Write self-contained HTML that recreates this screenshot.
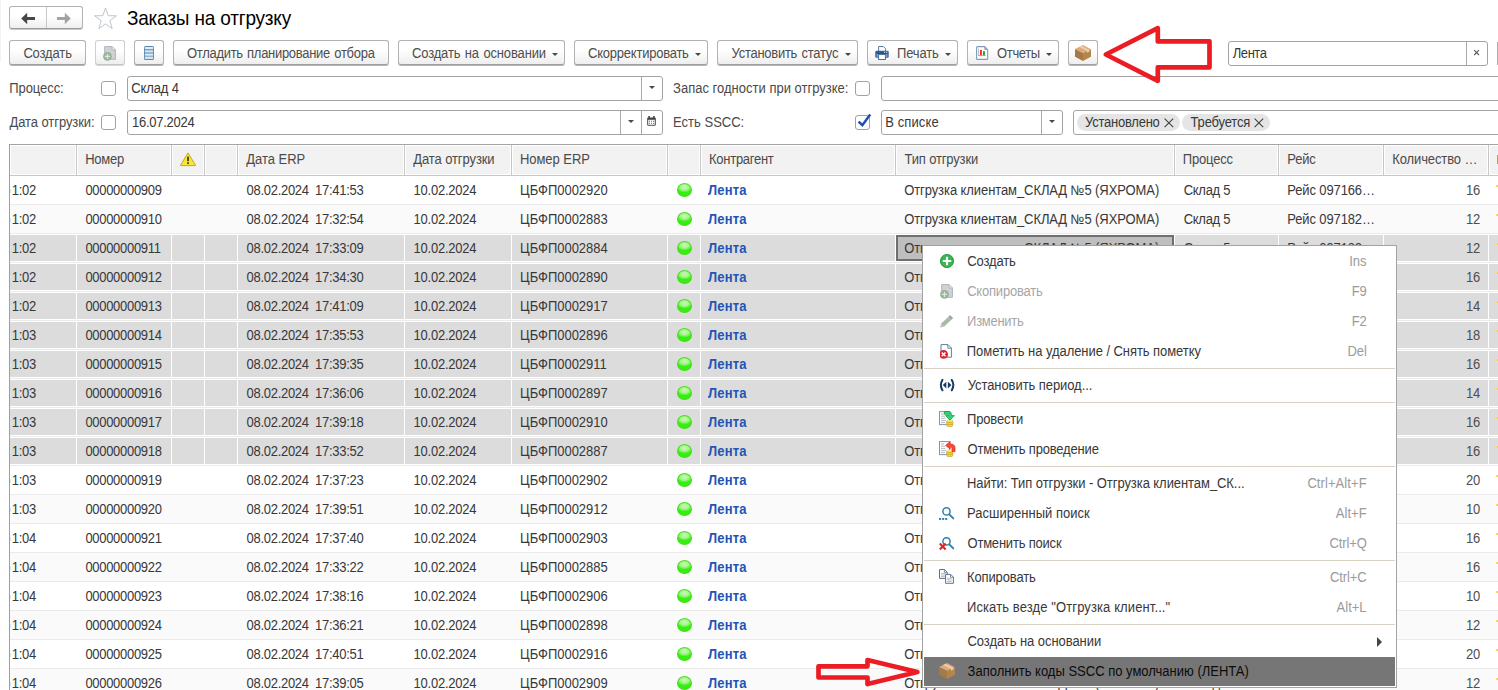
<!DOCTYPE html>
<html lang="ru"><head><meta charset="utf-8"><title>Заказы на отгрузку</title>
<style>
html,body{margin:0;padding:0;background:#fff;}
body{width:1498px;height:690px;overflow:hidden;position:relative;font-family:"Liberation Sans",sans-serif;font-size:13px;color:#383838;}
*{box-sizing:border-box;}
.a{position:absolute;}
.t{position:absolute;height:20px;line-height:20px;white-space:nowrap;transform:scaleY(1.075);transform-origin:0 15px;}
.g{color:#4e4e4e;}
.btn{position:absolute;top:40px;height:25px;border:1px solid #b2b2b2;border-bottom-color:#a0a0a0;border-radius:3px;background:linear-gradient(#fff 0%,#fff 40%,#eee 100%);box-shadow:0 1px 0 #b4b4b4;}
.btn.d{border-color:#cfcfcf;border-bottom-color:#c6c6c6;box-shadow:0 1px 0 #d6d6d6;}
.inp{position:absolute;height:25px;border:1px solid #a3a3a3;border-radius:3px;background:#fff;}
.dv{position:absolute;top:0;width:1px;height:23px;background:#a9a9a9;}
.cb{position:absolute;width:15px;height:15px;border:1px solid #a2a2a2;border-radius:3px;background:#fff;}
.lbl{color:#4a4a4a;}
.hc{position:absolute;top:146px;height:28px;background:#f2f2f2;}
.hl{position:absolute;top:145px;height:30px;width:1px;background:#c8c8c8;}
.rw{position:absolute;left:10px;width:1488px;height:28px;}
.rl{position:absolute;left:10px;width:1488px;height:1px;background:#ebebeb;}
.sc{position:absolute;height:26px;background:#dcdcdc;}
.blue{color:#2354b5;font-weight:bold;}
.dot{position:absolute;width:15px;height:14px;border-radius:50%;background:radial-gradient(ellipse 52% 38% at 50% 30%,#c9f7ba 0%,#a6f58c 55%,rgba(120,240,80,0) 100%),#36ee12;box-shadow:inset 0 0 0 1px #45de1a;}
.menu{position:absolute;left:922px;top:245px;width:475px;height:443px;background:#fff;border:1px solid #a3a3a3;}
.ms{position:absolute;left:1px;right:1px;height:1px;background:#d7d2c1;}
.k{color:#9b9b9b;}
.dis{color:#a6a6a6;}
.caret{position:absolute;width:0;height:0;border-left:3px solid transparent;border-right:3px solid transparent;border-top:3px solid #484848;}
</style></head><body>

<div class="a" style="left:0;top:0;width:1px;height:62px;background:#f3f3f3"></div>
<div class="a" style="left:9px;top:6px;width:74px;height:23px;border:1px solid #b2b2b2;border-bottom-color:#9c9c9c;border-radius:3px;background:linear-gradient(#fff 0%,#fff 45%,#eee 100%);box-shadow:0 1px 0 rgba(0,0,0,.22);"></div>
<div class="a" style="left:46px;top:7px;width:1px;height:21px;background:#c9c9c9;"></div>
<svg class="a" style="left:0;top:0" width="130" height="36" viewBox="0 0 130 36"><path d="M21.2 18.5 L27.2 12.8 L27.2 17 L35 17 L35 20 L27.2 20 L27.2 24.2 Z" fill="#474747"/><path d="M70.8 18.5 L64.8 12.8 L64.8 17 L57 17 L57 20 L64.8 20 L64.8 24.2 Z" fill="#a3a3a3"/><path d="M105.5 7.9 L108.2 15.7 L116.4 15.8 L109.8 20.7 L112.2 28.6 L105.5 23.9 L98.8 28.6 L101.2 20.7 L94.6 15.8 L102.8 15.7 Z" fill="#fff" stroke="#b5bec8" stroke-width="0.9"/></svg>
<div class="a" style="left:127px;top:6px;height:26px;line-height:26px;font-size:19px;color:#000;white-space:nowrap;letter-spacing:-0.22px;word-spacing:0.2px;transform:scaleY(1.04);transform-origin:0 19px;">Заказы на отгрузку</div>
<div class="btn" style="left:9px;width:77px;"></div><div class="t g" style="left:23.38px;top:44px;letter-spacing:-0.142px;">Создать</div>
<div class="btn d" style="left:95px;width:30px;"></div><svg class="a" style="left:103px;top:46px;" width="14" height="16" viewBox="0 0 14 16"><path d="M1.7 0.6 H9.2 L12.4 3.8 V13.3 H1.7 Z" fill="#d2d2d2" stroke="#a9b4c3" stroke-width="1"/><path d="M9 0.8 V4 H12.2" fill="#ececec" stroke="#a9b4c3" stroke-width="0.8"/><circle cx="4.5" cy="10.4" r="4.4" fill="#96b498"/><path d="M4.5 7.7 V13.1 M1.8 10.4 H7.2" stroke="#dbe6dc" stroke-width="1.3" fill="none"/></svg>
<div class="btn" style="left:134px;width:30px;"></div><svg class="a" style="left:144px;top:46px;" width="10" height="14" viewBox="0 0 10 14"><rect x="0" y="0" width="10" height="14" rx="1.6" fill="#5c86aa"/><rect x="0.8" y="1" width="8.4" height="2.3" rx="0.6" fill="#d9eaf8"/><rect x="0.8" y="4.2" width="8.4" height="2.3" rx="0.6" fill="#d2e6f6"/><rect x="0.8" y="7.4" width="8.4" height="2.3" rx="0.6" fill="#d9eaf8"/><rect x="0.8" y="10.6" width="8.4" height="2.3" rx="0.6" fill="#d2e6f6"/></svg>
<div class="btn" style="left:173px;width:216px;"></div><div class="t g" style="left:186.97px;top:44px;letter-spacing:-0.294px;word-spacing:1.0px;">Отладить планирование отбора</div>
<div class="btn" style="left:398px;width:167px;"></div><div class="t g" style="left:411.98px;top:44px;letter-spacing:-0.146px;word-spacing:1.0px;">Создать на основании</div><span class="caret" style="left:552px;top:53px"></span>
<div class="btn" style="left:574px;width:134px;"></div><div class="t g" style="left:588.08px;top:44px;letter-spacing:-0.234px;">Скорректировать</div><span class="caret" style="left:695px;top:53px"></span>
<div class="btn" style="left:717px;width:141px;"></div><div class="t g" style="left:731.53px;top:44px;letter-spacing:-0.261px;word-spacing:1.0px;">Установить статус</div><span class="caret" style="left:845px;top:53px"></span>
<div class="btn" style="left:867px;width:91px;"></div><div class="t g" style="left:897.0px;top:44px;letter-spacing:-0.14px;">Печать</div><span class="caret" style="left:945px;top:53px"></span><svg class="a" style="left:875px;top:46px;" width="14" height="14" viewBox="0 0 14 14"><path d="M3.6 5 V0.5 H8.4 L10.4 2.5 V5" fill="#fff" stroke="#5d7d9c" stroke-width="1"/><rect x="0.3" y="4.8" width="13.4" height="7" rx="1.4" fill="#2d5f92"/><rect x="1.6" y="7.6" width="10.8" height="3.4" fill="#7fa3c8"/><rect x="2" y="6.9" width="10" height="1" fill="#27486b"/><rect x="9" y="5.7" width="1.2" height="1" fill="#e8f0f8"/><rect x="11" y="5.7" width="1.2" height="1" fill="#e8f0f8"/><rect x="3.6" y="8.4" width="6.8" height="5.1" fill="#fff" stroke="#486f96" stroke-width="1"/></svg>
<div class="btn" style="left:967px;width:92px;"></div><div class="t g" style="left:997.08px;top:44px;letter-spacing:-0.375px;">Отчеты</div><span class="caret" style="left:1046px;top:53px"></span><svg class="a" style="left:976px;top:46px;" width="13" height="14" viewBox="0 0 13 14"><path d="M0.6 1.6 Q0.6 0.6 1.6 0.6 H8.6 L11.7 3.7 V12.4 Q11.7 13.4 10.7 13.4 H1.6 Q0.6 13.4 0.6 12.4 Z" fill="#fff" stroke="#7f9bb6" stroke-width="1.1"/><path d="M8.4 0.8 L11.5 3.9 H8.4 Z" fill="#8aa3bb"/><rect x="2.2" y="2.6" width="0.8" height="7" fill="#aab3bd"/><rect x="2.2" y="9.2" width="7.6" height="0.8" fill="#c98fa0"/><rect x="4" y="4" width="1.9" height="5.2" fill="#ff2a1c"/><rect x="7" y="5.2" width="1.9" height="4" fill="#19a22c"/></svg>
<div class="btn" style="left:1068px;width:30px;"></div><svg class="a" style="left:1075px;top:45px;" width="16" height="16" viewBox="0 0 16 16"><path d="M8 0 L16 4.2 L8 8.1 L0 4.1 Z" fill="#dcaa7b"/><path d="M0 4.1 L8 8.1 L8 15.9 L0 11.8 Z" fill="#a57a47"/><path d="M16 4.2 L8 8.1 L8 15.9 L16 11.8 Z" fill="#b5854f"/><path d="M4.2 1.9 L6.6 0.7 L14.4 4.9 L14.4 6.6 L12.1 7.7 L12.1 6.1 Z" fill="#f1cdac"/></svg>
<div class="inp" style="left:1228px;top:41px;width:260px;height:25px;"><div class="dv" style="left:237px"></div></div>
<div class="t " style="left:1232.77px;top:44px;letter-spacing:-0.444px;">Лента</div>
<svg class="a" style="left:1473px;top:49px" width="8" height="8" viewBox="0 0 8 8"><path d="M1.2 1.2 L6 6 M6 1.2 L1.2 6" stroke="#5a5a5a" stroke-width="1.1" fill="none"/></svg>
<div class="a" style="left:1497px;top:42px;width:1px;height:23px;background:#adadad"></div>
<div class="t lbl" style="left:9.2px;top:79px;letter-spacing:-0.064px;">Процесс:</div>
<div class="cb" style="left:101px;top:81px"></div>
<div class="inp" style="left:127px;top:76px;width:536px;"><div class="dv" style="left:513px"></div><span class="caret" style="left:521px;top:9px"></span></div>
<div class="t " style="left:131.18px;top:79px;letter-spacing:-0.117px;">Склад 4</div>
<div class="t lbl" style="left:673.1px;top:79px;letter-spacing:0.007px;">Запас годности при отгрузке:</div>
<div class="cb" style="left:855px;top:81px"></div>
<div class="inp" style="left:881px;top:76px;width:640px;"></div>
<div class="t lbl" style="left:9.47px;top:113px;letter-spacing:-0.075px;">Дата отгрузки:</div>
<div class="cb" style="left:101px;top:115px"></div>
<div class="inp" style="left:127px;top:110px;width:536px;"><div class="dv" style="left:492px"></div><span class="caret" style="left:500px;top:9px"></span><div class="dv" style="left:513px"></div></div>
<svg class="a" style="left:647px;top:116px;" width="9" height="10" viewBox="0 0 9 10"><rect x="0.2" y="1.4" width="8.6" height="8.4" rx="1.2" fill="#454545"/><rect x="1.3" y="0" width="1.6" height="2.4" fill="#454545"/><rect x="6.1" y="0" width="1.6" height="2.4" fill="#454545"/><rect x="1.2" y="3.8" width="6.6" height="5" fill="#fff"/><rect x="2" y="4.7" width="1" height="1" fill="#666"/><rect x="4" y="4.7" width="1" height="1" fill="#666"/><rect x="6" y="4.7" width="1" height="1" fill="#666"/><rect x="2" y="6.8" width="1" height="1" fill="#666"/><rect x="4" y="6.8" width="1" height="1" fill="#666"/><rect x="6" y="6.8" width="1" height="1" fill="#666"/></svg>
<div class="t " style="left:132.0px;top:113px;letter-spacing:-0.272px;">16.07.2024</div>
<div class="t lbl" style="left:673.08px;top:113px;letter-spacing:0.006px;">Есть SSCC:</div>
<div class="cb" style="left:855px;top:115px"></div>
<svg class="a" style="left:857px;top:113px;" width="16" height="15" viewBox="0 0 16 15"><path d="M1.6 8.6 L5.4 12.2 L13.2 1.6" fill="none" stroke="#1f4fb0" stroke-width="2.5" stroke-linecap="butt" stroke-linejoin="miter"/></svg>
<div class="inp" style="left:881px;top:110px;width:182px;"><div class="dv" style="left:159px"></div><span class="caret" style="left:167px;top:9px"></span></div>
<div class="t " style="left:885.17px;top:113px;letter-spacing:0.118px;">В списке</div>
<div class="inp" style="left:1073px;top:110px;width:440px;"></div>
<div class="a" style="left:1077px;top:114px;width:103px;height:17px;border-radius:9px;background:#e5e5e5;"></div>
<div class="t " style="left:1085.12px;top:113px;letter-spacing:-0.245px;">Установлено</div>
<div class="a" style="left:1182px;top:114px;width:88px;height:17px;border-radius:9px;background:#e5e5e5;"></div>
<div class="t " style="left:1190.55px;top:113px;letter-spacing:-0.175px;">Требуется</div>
<svg class="a" style="left:1164px;top:118px" width="10" height="10" viewBox="0 0 10 10"><path d="M0.6 0.6 L9.2 9.2 M9.2 0.6 L0.6 9.2" stroke="#404040" stroke-width="1.1" fill="none"/></svg>
<svg class="a" style="left:1254px;top:118px" width="10" height="10" viewBox="0 0 10 10"><path d="M0.6 0.6 L9.2 9.2 M9.2 0.6 L0.6 9.2" stroke="#404040" stroke-width="1.1" fill="none"/></svg>
<div class="a" style="left:9px;top:144px;width:1489px;height:1px;background:#a4a4a4"></div>
<div class="a" style="left:9px;top:144px;width:1px;height:546px;background:#9f9f9f"></div>
<div class="a" style="left:10px;top:175px;width:1488px;height:1px;background:#c6c6c6"></div>
<div class="hc" style="left:11px;width:64px;"></div>
<div class="hl" style="left:76px"></div>
<div class="hc" style="left:78px;width:92px;"></div>
<div class="hl" style="left:171px"></div>
<div class="t lbl" style="left:85.17px;top:150px;letter-spacing:-0.219px;">Номер</div>
<div class="hc" style="left:173px;width:30px;"></div>
<div class="hl" style="left:204px"></div>
<svg class="a" style="left:180px;top:152px;" width="16" height="15" viewBox="0 0 16 15"><path d="M8 0.9 L15.4 13 Q15.6 13.6 15 13.6 H1 Q0.4 13.6 0.6 13 Z" fill="#fbe535" stroke="#b3a11c" stroke-width="0.9" stroke-linejoin="round"/><rect x="7.2" y="4.6" width="1.7" height="4.6" fill="#3d3600"/><rect x="7.2" y="10.3" width="1.7" height="1.7" fill="#3d3600"/></svg>
<div class="hc" style="left:206px;width:30px;"></div>
<div class="hl" style="left:237px"></div>
<div class="hc" style="left:239px;width:164px;"></div>
<div class="hl" style="left:404px"></div>
<div class="t lbl" style="left:246.17px;top:150px;letter-spacing:-0.011px;">Дата ERP</div>
<div class="hc" style="left:406px;width:104px;"></div>
<div class="hl" style="left:511px"></div>
<div class="t lbl" style="left:413.27px;top:150px;letter-spacing:-0.1px;">Дата отгрузки</div>
<div class="hc" style="left:513px;width:153px;"></div>
<div class="hl" style="left:667px"></div>
<div class="t lbl" style="left:519.98px;top:150px;letter-spacing:-0.05px;">Номер ERP</div>
<div class="hc" style="left:669px;width:30px;"></div>
<div class="hl" style="left:700px"></div>
<div class="hc" style="left:702px;width:192px;"></div>
<div class="hl" style="left:895px"></div>
<div class="t lbl" style="left:709.07px;top:150px;letter-spacing:-0.275px;">Контрагент</div>
<div class="hc" style="left:897px;width:276px;"></div>
<div class="hl" style="left:1174px"></div>
<div class="t lbl" style="left:904.55px;top:150px;letter-spacing:-0.159px;">Тип отгрузки</div>
<div class="hc" style="left:1176px;width:101px;"></div>
<div class="hl" style="left:1278px"></div>
<div class="t lbl" style="left:1182.7px;top:150px;letter-spacing:-0.15px;">Процесс</div>
<div class="hc" style="left:1280px;width:102px;"></div>
<div class="hl" style="left:1383px"></div>
<div class="t lbl" style="left:1287.28px;top:150px;letter-spacing:-0.175px;">Рейс</div>
<div class="hc" style="left:1385px;width:102px;"></div>
<div class="hl" style="left:1488px"></div>
<div class="t lbl" style="left:1392.28px;top:150px;letter-spacing:-0.118px;">Количество …</div>
<div class="hc" style="left:1490px;width:19px;"></div>
<div class="a" style="left:1497px;top:155px;width:1px;height:9px;background:#b7996b"></div>
<div class="rl" style="top:204px"></div>
<div class="a" style="left:10px;top:189px;width:1px;height:4px;background:#d3e8f6"></div>
<div class="t " style="left:11.8px;top:181px;letter-spacing:-0.275px;">1:02</div>
<div class="t " style="left:85.4px;top:181px;letter-spacing:-0.297px;">00000000909</div>
<div class="t " style="left:246.5px;top:181px;letter-spacing:-0.281px;word-spacing:3.0px;">08.02.2024 17:41:53</div>
<div class="t " style="left:413.6px;top:181px;letter-spacing:-0.25px;">10.02.2024</div>
<div class="t " style="left:520.08px;top:181px;letter-spacing:-0.023px;">ЦБФП0002920</div>
<div class="dot" style="left:677px;top:183px"></div>
<div class="t blue" style="left:708.1px;top:181px;letter-spacing:0.156px;">Лента</div>
<div class="t " style="left:904.17px;top:181px;letter-spacing:-0.085px;">Отгрузка клиентам_СКЛАД №5 (ЯХРОМА)</div>
<div class="t " style="left:1183.67px;top:181px;letter-spacing:-0.275px;">Склад 5</div>
<div class="t " style="left:1287.17px;top:181px;letter-spacing:-0.114px;">Рейс 097166…</div>
<div class="t g" style="left:1466.0px;top:181px;letter-spacing:-0.275px;">16</div>
<div class="a" style="left:1496px;top:185px;width:2px;height:2px;background:linear-gradient(90deg,#fbe9a8,#f3c31b)"></div>
<div class="rw" style="top:205px;background:#fafafa"></div>
<div class="rl" style="top:233px"></div>
<div class="a" style="left:10px;top:218px;width:1px;height:4px;background:#d3e8f6"></div>
<div class="t " style="left:11.8px;top:210px;letter-spacing:-0.275px;">1:02</div>
<div class="t " style="left:85.4px;top:210px;letter-spacing:-0.297px;">00000000910</div>
<div class="t " style="left:246.5px;top:210px;letter-spacing:-0.281px;word-spacing:3.0px;">08.02.2024 17:32:54</div>
<div class="t " style="left:413.6px;top:210px;letter-spacing:-0.25px;">10.02.2024</div>
<div class="t " style="left:520.08px;top:210px;letter-spacing:-0.023px;">ЦБФП0002883</div>
<div class="dot" style="left:677px;top:212px"></div>
<div class="t blue" style="left:708.1px;top:210px;letter-spacing:0.156px;">Лента</div>
<div class="t " style="left:904.17px;top:210px;letter-spacing:-0.085px;">Отгрузка клиентам_СКЛАД №5 (ЯХРОМА)</div>
<div class="t " style="left:1183.67px;top:210px;letter-spacing:-0.275px;">Склад 5</div>
<div class="t " style="left:1287.17px;top:210px;letter-spacing:-0.114px;">Рейс 097182…</div>
<div class="t g" style="left:1466.0px;top:210px;letter-spacing:-0.275px;">12</div>
<div class="a" style="left:1496px;top:214px;width:2px;height:2px;background:linear-gradient(90deg,#fbe9a8,#f3c31b)"></div>
<div class="sc" style="left:10px;top:235px;width:66px;"></div>
<div class="sc" style="left:77px;top:235px;width:94px;"></div>
<div class="sc" style="left:172px;top:235px;width:32px;"></div>
<div class="sc" style="left:205px;top:235px;width:32px;"></div>
<div class="sc" style="left:238px;top:235px;width:166px;"></div>
<div class="sc" style="left:405px;top:235px;width:106px;"></div>
<div class="sc" style="left:512px;top:235px;width:155px;"></div>
<div class="sc" style="left:668px;top:235px;width:32px;"></div>
<div class="sc" style="left:701px;top:235px;width:194px;"></div>
<div class="sc" style="left:896px;top:235px;width:278px;"></div>
<div class="sc" style="left:1175px;top:235px;width:103px;"></div>
<div class="sc" style="left:1279px;top:235px;width:104px;"></div>
<div class="sc" style="left:1384px;top:235px;width:104px;"></div>
<div class="sc" style="left:1489px;top:235px;width:21px;"></div>
<div class="rl" style="top:262px"></div>
<div class="a" style="left:896px;top:235px;width:278px;height:26px;background:#bebebe;border:2px solid #6f6f6f;"></div>
<div class="a" style="left:10px;top:247px;width:1px;height:4px;background:#d3e8f6"></div>
<div class="t " style="left:11.8px;top:239px;letter-spacing:-0.275px;">1:02</div>
<div class="t " style="left:85.4px;top:239px;letter-spacing:-0.297px;">00000000911</div>
<div class="t " style="left:246.5px;top:239px;letter-spacing:-0.281px;word-spacing:3.0px;">08.02.2024 17:33:09</div>
<div class="t " style="left:413.6px;top:239px;letter-spacing:-0.25px;">10.02.2024</div>
<div class="t " style="left:520.08px;top:239px;letter-spacing:-0.023px;">ЦБФП0002884</div>
<div class="dot" style="left:677px;top:241px"></div>
<div class="t blue" style="left:708.1px;top:239px;letter-spacing:0.156px;">Лента</div>
<div class="t " style="left:904.17px;top:239px;letter-spacing:-0.085px;">Отгрузка клиентам_СКЛАД №5 (ЯХРОМА)</div>
<div class="t " style="left:1183.67px;top:239px;letter-spacing:-0.275px;">Склад 5</div>
<div class="t " style="left:1287.17px;top:239px;letter-spacing:-0.114px;">Рейс 097182…</div>
<div class="t g" style="left:1466.0px;top:239px;letter-spacing:-0.275px;">12</div>
<div class="a" style="left:1496px;top:243px;width:2px;height:2px;background:linear-gradient(90deg,#fbe9a8,#f3c31b)"></div>
<div class="sc" style="left:10px;top:264px;width:66px;"></div>
<div class="sc" style="left:77px;top:264px;width:94px;"></div>
<div class="sc" style="left:172px;top:264px;width:32px;"></div>
<div class="sc" style="left:205px;top:264px;width:32px;"></div>
<div class="sc" style="left:238px;top:264px;width:166px;"></div>
<div class="sc" style="left:405px;top:264px;width:106px;"></div>
<div class="sc" style="left:512px;top:264px;width:155px;"></div>
<div class="sc" style="left:668px;top:264px;width:32px;"></div>
<div class="sc" style="left:701px;top:264px;width:194px;"></div>
<div class="sc" style="left:896px;top:264px;width:278px;"></div>
<div class="sc" style="left:1175px;top:264px;width:103px;"></div>
<div class="sc" style="left:1279px;top:264px;width:104px;"></div>
<div class="sc" style="left:1384px;top:264px;width:104px;"></div>
<div class="sc" style="left:1489px;top:264px;width:21px;"></div>
<div class="rl" style="top:291px"></div>
<div class="a" style="left:10px;top:276px;width:1px;height:4px;background:#d3e8f6"></div>
<div class="t " style="left:11.8px;top:268px;letter-spacing:-0.275px;">1:02</div>
<div class="t " style="left:85.4px;top:268px;letter-spacing:-0.297px;">00000000912</div>
<div class="t " style="left:246.5px;top:268px;letter-spacing:-0.281px;word-spacing:3.0px;">08.02.2024 17:34:30</div>
<div class="t " style="left:413.6px;top:268px;letter-spacing:-0.25px;">10.02.2024</div>
<div class="t " style="left:520.08px;top:268px;letter-spacing:-0.023px;">ЦБФП0002890</div>
<div class="dot" style="left:677px;top:270px"></div>
<div class="t blue" style="left:708.1px;top:268px;letter-spacing:0.156px;">Лента</div>
<div class="t " style="left:904.17px;top:268px;letter-spacing:-0.085px;">Отгрузка клиентам_СКЛАД №5 (ЯХРОМА)</div>
<div class="t " style="left:1183.67px;top:268px;letter-spacing:-0.275px;">Склад 5</div>
<div class="t " style="left:1287.17px;top:268px;letter-spacing:-0.114px;">Рейс 097166…</div>
<div class="t g" style="left:1466.0px;top:268px;letter-spacing:-0.275px;">16</div>
<div class="a" style="left:1496px;top:272px;width:2px;height:2px;background:linear-gradient(90deg,#fbe9a8,#f3c31b)"></div>
<div class="sc" style="left:10px;top:293px;width:66px;"></div>
<div class="sc" style="left:77px;top:293px;width:94px;"></div>
<div class="sc" style="left:172px;top:293px;width:32px;"></div>
<div class="sc" style="left:205px;top:293px;width:32px;"></div>
<div class="sc" style="left:238px;top:293px;width:166px;"></div>
<div class="sc" style="left:405px;top:293px;width:106px;"></div>
<div class="sc" style="left:512px;top:293px;width:155px;"></div>
<div class="sc" style="left:668px;top:293px;width:32px;"></div>
<div class="sc" style="left:701px;top:293px;width:194px;"></div>
<div class="sc" style="left:896px;top:293px;width:278px;"></div>
<div class="sc" style="left:1175px;top:293px;width:103px;"></div>
<div class="sc" style="left:1279px;top:293px;width:104px;"></div>
<div class="sc" style="left:1384px;top:293px;width:104px;"></div>
<div class="sc" style="left:1489px;top:293px;width:21px;"></div>
<div class="rl" style="top:320px"></div>
<div class="a" style="left:10px;top:305px;width:1px;height:4px;background:#d3e8f6"></div>
<div class="t " style="left:11.8px;top:297px;letter-spacing:-0.275px;">1:02</div>
<div class="t " style="left:85.4px;top:297px;letter-spacing:-0.297px;">00000000913</div>
<div class="t " style="left:246.5px;top:297px;letter-spacing:-0.281px;word-spacing:3.0px;">08.02.2024 17:41:09</div>
<div class="t " style="left:413.6px;top:297px;letter-spacing:-0.25px;">10.02.2024</div>
<div class="t " style="left:520.08px;top:297px;letter-spacing:-0.023px;">ЦБФП0002917</div>
<div class="dot" style="left:677px;top:299px"></div>
<div class="t blue" style="left:708.1px;top:297px;letter-spacing:0.156px;">Лента</div>
<div class="t " style="left:904.17px;top:297px;letter-spacing:-0.085px;">Отгрузка клиентам_СКЛАД №5 (ЯХРОМА)</div>
<div class="t " style="left:1183.67px;top:297px;letter-spacing:-0.275px;">Склад 5</div>
<div class="t " style="left:1287.17px;top:297px;letter-spacing:-0.114px;">Рейс 097166…</div>
<div class="t g" style="left:1466.0px;top:297px;letter-spacing:-0.275px;">14</div>
<div class="a" style="left:1496px;top:301px;width:2px;height:2px;background:linear-gradient(90deg,#fbe9a8,#f3c31b)"></div>
<div class="sc" style="left:10px;top:322px;width:66px;"></div>
<div class="sc" style="left:77px;top:322px;width:94px;"></div>
<div class="sc" style="left:172px;top:322px;width:32px;"></div>
<div class="sc" style="left:205px;top:322px;width:32px;"></div>
<div class="sc" style="left:238px;top:322px;width:166px;"></div>
<div class="sc" style="left:405px;top:322px;width:106px;"></div>
<div class="sc" style="left:512px;top:322px;width:155px;"></div>
<div class="sc" style="left:668px;top:322px;width:32px;"></div>
<div class="sc" style="left:701px;top:322px;width:194px;"></div>
<div class="sc" style="left:896px;top:322px;width:278px;"></div>
<div class="sc" style="left:1175px;top:322px;width:103px;"></div>
<div class="sc" style="left:1279px;top:322px;width:104px;"></div>
<div class="sc" style="left:1384px;top:322px;width:104px;"></div>
<div class="sc" style="left:1489px;top:322px;width:21px;"></div>
<div class="rl" style="top:349px"></div>
<div class="a" style="left:10px;top:334px;width:1px;height:4px;background:#d3e8f6"></div>
<div class="t " style="left:11.8px;top:326px;letter-spacing:-0.275px;">1:03</div>
<div class="t " style="left:85.4px;top:326px;letter-spacing:-0.297px;">00000000914</div>
<div class="t " style="left:246.5px;top:326px;letter-spacing:-0.281px;word-spacing:3.0px;">08.02.2024 17:35:53</div>
<div class="t " style="left:413.6px;top:326px;letter-spacing:-0.25px;">10.02.2024</div>
<div class="t " style="left:520.08px;top:326px;letter-spacing:-0.023px;">ЦБФП0002896</div>
<div class="dot" style="left:677px;top:328px"></div>
<div class="t blue" style="left:708.1px;top:326px;letter-spacing:0.156px;">Лента</div>
<div class="t " style="left:904.17px;top:326px;letter-spacing:-0.085px;">Отгрузка клиентам_СКЛАД №5 (ЯХРОМА)</div>
<div class="t " style="left:1183.67px;top:326px;letter-spacing:-0.275px;">Склад 5</div>
<div class="t " style="left:1287.17px;top:326px;letter-spacing:-0.114px;">Рейс 097166…</div>
<div class="t g" style="left:1466.0px;top:326px;letter-spacing:-0.275px;">18</div>
<div class="a" style="left:1496px;top:330px;width:2px;height:2px;background:linear-gradient(90deg,#fbe9a8,#f3c31b)"></div>
<div class="sc" style="left:10px;top:351px;width:66px;"></div>
<div class="sc" style="left:77px;top:351px;width:94px;"></div>
<div class="sc" style="left:172px;top:351px;width:32px;"></div>
<div class="sc" style="left:205px;top:351px;width:32px;"></div>
<div class="sc" style="left:238px;top:351px;width:166px;"></div>
<div class="sc" style="left:405px;top:351px;width:106px;"></div>
<div class="sc" style="left:512px;top:351px;width:155px;"></div>
<div class="sc" style="left:668px;top:351px;width:32px;"></div>
<div class="sc" style="left:701px;top:351px;width:194px;"></div>
<div class="sc" style="left:896px;top:351px;width:278px;"></div>
<div class="sc" style="left:1175px;top:351px;width:103px;"></div>
<div class="sc" style="left:1279px;top:351px;width:104px;"></div>
<div class="sc" style="left:1384px;top:351px;width:104px;"></div>
<div class="sc" style="left:1489px;top:351px;width:21px;"></div>
<div class="rl" style="top:378px"></div>
<div class="a" style="left:10px;top:363px;width:1px;height:4px;background:#d3e8f6"></div>
<div class="t " style="left:11.8px;top:355px;letter-spacing:-0.275px;">1:03</div>
<div class="t " style="left:85.4px;top:355px;letter-spacing:-0.297px;">00000000915</div>
<div class="t " style="left:246.5px;top:355px;letter-spacing:-0.281px;word-spacing:3.0px;">08.02.2024 17:39:35</div>
<div class="t " style="left:413.6px;top:355px;letter-spacing:-0.25px;">10.02.2024</div>
<div class="t " style="left:520.08px;top:355px;letter-spacing:-0.023px;">ЦБФП0002911</div>
<div class="dot" style="left:677px;top:357px"></div>
<div class="t blue" style="left:708.1px;top:355px;letter-spacing:0.156px;">Лента</div>
<div class="t " style="left:904.17px;top:355px;letter-spacing:-0.085px;">Отгрузка клиентам_СКЛАД №5 (ЯХРОМА)</div>
<div class="t " style="left:1183.67px;top:355px;letter-spacing:-0.275px;">Склад 5</div>
<div class="t " style="left:1287.17px;top:355px;letter-spacing:-0.114px;">Рейс 097166…</div>
<div class="t g" style="left:1466.0px;top:355px;letter-spacing:-0.275px;">16</div>
<div class="a" style="left:1496px;top:359px;width:2px;height:2px;background:linear-gradient(90deg,#fbe9a8,#f3c31b)"></div>
<div class="sc" style="left:10px;top:380px;width:66px;"></div>
<div class="sc" style="left:77px;top:380px;width:94px;"></div>
<div class="sc" style="left:172px;top:380px;width:32px;"></div>
<div class="sc" style="left:205px;top:380px;width:32px;"></div>
<div class="sc" style="left:238px;top:380px;width:166px;"></div>
<div class="sc" style="left:405px;top:380px;width:106px;"></div>
<div class="sc" style="left:512px;top:380px;width:155px;"></div>
<div class="sc" style="left:668px;top:380px;width:32px;"></div>
<div class="sc" style="left:701px;top:380px;width:194px;"></div>
<div class="sc" style="left:896px;top:380px;width:278px;"></div>
<div class="sc" style="left:1175px;top:380px;width:103px;"></div>
<div class="sc" style="left:1279px;top:380px;width:104px;"></div>
<div class="sc" style="left:1384px;top:380px;width:104px;"></div>
<div class="sc" style="left:1489px;top:380px;width:21px;"></div>
<div class="rl" style="top:407px"></div>
<div class="a" style="left:10px;top:392px;width:1px;height:4px;background:#d3e8f6"></div>
<div class="t " style="left:11.8px;top:384px;letter-spacing:-0.275px;">1:03</div>
<div class="t " style="left:85.4px;top:384px;letter-spacing:-0.297px;">00000000916</div>
<div class="t " style="left:246.5px;top:384px;letter-spacing:-0.281px;word-spacing:3.0px;">08.02.2024 17:36:06</div>
<div class="t " style="left:413.6px;top:384px;letter-spacing:-0.25px;">10.02.2024</div>
<div class="t " style="left:520.08px;top:384px;letter-spacing:-0.023px;">ЦБФП0002897</div>
<div class="dot" style="left:677px;top:386px"></div>
<div class="t blue" style="left:708.1px;top:384px;letter-spacing:0.156px;">Лента</div>
<div class="t " style="left:904.17px;top:384px;letter-spacing:-0.085px;">Отгрузка клиентам_СКЛАД №5 (ЯХРОМА)</div>
<div class="t " style="left:1183.67px;top:384px;letter-spacing:-0.275px;">Склад 5</div>
<div class="t " style="left:1287.17px;top:384px;letter-spacing:-0.114px;">Рейс 097166…</div>
<div class="t g" style="left:1466.0px;top:384px;letter-spacing:-0.275px;">14</div>
<div class="a" style="left:1496px;top:388px;width:2px;height:2px;background:linear-gradient(90deg,#fbe9a8,#f3c31b)"></div>
<div class="sc" style="left:10px;top:409px;width:66px;"></div>
<div class="sc" style="left:77px;top:409px;width:94px;"></div>
<div class="sc" style="left:172px;top:409px;width:32px;"></div>
<div class="sc" style="left:205px;top:409px;width:32px;"></div>
<div class="sc" style="left:238px;top:409px;width:166px;"></div>
<div class="sc" style="left:405px;top:409px;width:106px;"></div>
<div class="sc" style="left:512px;top:409px;width:155px;"></div>
<div class="sc" style="left:668px;top:409px;width:32px;"></div>
<div class="sc" style="left:701px;top:409px;width:194px;"></div>
<div class="sc" style="left:896px;top:409px;width:278px;"></div>
<div class="sc" style="left:1175px;top:409px;width:103px;"></div>
<div class="sc" style="left:1279px;top:409px;width:104px;"></div>
<div class="sc" style="left:1384px;top:409px;width:104px;"></div>
<div class="sc" style="left:1489px;top:409px;width:21px;"></div>
<div class="rl" style="top:436px"></div>
<div class="a" style="left:10px;top:421px;width:1px;height:4px;background:#d3e8f6"></div>
<div class="t " style="left:11.8px;top:413px;letter-spacing:-0.275px;">1:03</div>
<div class="t " style="left:85.4px;top:413px;letter-spacing:-0.297px;">00000000917</div>
<div class="t " style="left:246.5px;top:413px;letter-spacing:-0.281px;word-spacing:3.0px;">08.02.2024 17:39:18</div>
<div class="t " style="left:413.6px;top:413px;letter-spacing:-0.25px;">10.02.2024</div>
<div class="t " style="left:520.08px;top:413px;letter-spacing:-0.023px;">ЦБФП0002910</div>
<div class="dot" style="left:677px;top:415px"></div>
<div class="t blue" style="left:708.1px;top:413px;letter-spacing:0.156px;">Лента</div>
<div class="t " style="left:904.17px;top:413px;letter-spacing:-0.085px;">Отгрузка клиентам_СКЛАД №5 (ЯХРОМА)</div>
<div class="t " style="left:1183.67px;top:413px;letter-spacing:-0.275px;">Склад 5</div>
<div class="t " style="left:1287.17px;top:413px;letter-spacing:-0.114px;">Рейс 097166…</div>
<div class="t g" style="left:1466.0px;top:413px;letter-spacing:-0.275px;">16</div>
<div class="a" style="left:1496px;top:417px;width:2px;height:2px;background:linear-gradient(90deg,#fbe9a8,#f3c31b)"></div>
<div class="sc" style="left:10px;top:438px;width:66px;"></div>
<div class="sc" style="left:77px;top:438px;width:94px;"></div>
<div class="sc" style="left:172px;top:438px;width:32px;"></div>
<div class="sc" style="left:205px;top:438px;width:32px;"></div>
<div class="sc" style="left:238px;top:438px;width:166px;"></div>
<div class="sc" style="left:405px;top:438px;width:106px;"></div>
<div class="sc" style="left:512px;top:438px;width:155px;"></div>
<div class="sc" style="left:668px;top:438px;width:32px;"></div>
<div class="sc" style="left:701px;top:438px;width:194px;"></div>
<div class="sc" style="left:896px;top:438px;width:278px;"></div>
<div class="sc" style="left:1175px;top:438px;width:103px;"></div>
<div class="sc" style="left:1279px;top:438px;width:104px;"></div>
<div class="sc" style="left:1384px;top:438px;width:104px;"></div>
<div class="sc" style="left:1489px;top:438px;width:21px;"></div>
<div class="rl" style="top:465px"></div>
<div class="a" style="left:10px;top:450px;width:1px;height:4px;background:#d3e8f6"></div>
<div class="t " style="left:11.8px;top:442px;letter-spacing:-0.275px;">1:03</div>
<div class="t " style="left:85.4px;top:442px;letter-spacing:-0.297px;">00000000918</div>
<div class="t " style="left:246.5px;top:442px;letter-spacing:-0.281px;word-spacing:3.0px;">08.02.2024 17:33:52</div>
<div class="t " style="left:413.6px;top:442px;letter-spacing:-0.25px;">10.02.2024</div>
<div class="t " style="left:520.08px;top:442px;letter-spacing:-0.023px;">ЦБФП0002887</div>
<div class="dot" style="left:677px;top:444px"></div>
<div class="t blue" style="left:708.1px;top:442px;letter-spacing:0.156px;">Лента</div>
<div class="t " style="left:904.17px;top:442px;letter-spacing:-0.085px;">Отгрузка клиентам_СКЛАД №5 (ЯХРОМА)</div>
<div class="t " style="left:1183.67px;top:442px;letter-spacing:-0.275px;">Склад 5</div>
<div class="t " style="left:1287.17px;top:442px;letter-spacing:-0.114px;">Рейс 097166…</div>
<div class="t g" style="left:1466.0px;top:442px;letter-spacing:-0.275px;">16</div>
<div class="a" style="left:1496px;top:446px;width:2px;height:2px;background:linear-gradient(90deg,#fbe9a8,#f3c31b)"></div>
<div class="rl" style="top:494px"></div>
<div class="a" style="left:10px;top:479px;width:1px;height:4px;background:#d3e8f6"></div>
<div class="t " style="left:11.8px;top:471px;letter-spacing:-0.275px;">1:03</div>
<div class="t " style="left:85.4px;top:471px;letter-spacing:-0.297px;">00000000919</div>
<div class="t " style="left:246.5px;top:471px;letter-spacing:-0.281px;word-spacing:3.0px;">08.02.2024 17:37:23</div>
<div class="t " style="left:413.6px;top:471px;letter-spacing:-0.25px;">10.02.2024</div>
<div class="t " style="left:520.08px;top:471px;letter-spacing:-0.023px;">ЦБФП0002902</div>
<div class="dot" style="left:677px;top:473px"></div>
<div class="t blue" style="left:708.1px;top:471px;letter-spacing:0.156px;">Лента</div>
<div class="t " style="left:904.17px;top:471px;letter-spacing:-0.085px;">Отгрузка клиентам_СКЛАД №5 (ЯХРОМА)</div>
<div class="t " style="left:1183.67px;top:471px;letter-spacing:-0.275px;">Склад 5</div>
<div class="t " style="left:1287.17px;top:471px;letter-spacing:-0.114px;">Рейс 097166…</div>
<div class="t g" style="left:1466.0px;top:471px;letter-spacing:-0.275px;">20</div>
<div class="a" style="left:1496px;top:475px;width:2px;height:2px;background:linear-gradient(90deg,#fbe9a8,#f3c31b)"></div>
<div class="rw" style="top:495px;background:#fafafa"></div>
<div class="rl" style="top:523px"></div>
<div class="a" style="left:10px;top:508px;width:1px;height:4px;background:#d3e8f6"></div>
<div class="t " style="left:11.8px;top:500px;letter-spacing:-0.275px;">1:03</div>
<div class="t " style="left:85.4px;top:500px;letter-spacing:-0.297px;">00000000920</div>
<div class="t " style="left:246.5px;top:500px;letter-spacing:-0.281px;word-spacing:3.0px;">08.02.2024 17:39:51</div>
<div class="t " style="left:413.6px;top:500px;letter-spacing:-0.25px;">10.02.2024</div>
<div class="t " style="left:520.08px;top:500px;letter-spacing:-0.023px;">ЦБФП0002912</div>
<div class="dot" style="left:677px;top:502px"></div>
<div class="t blue" style="left:708.1px;top:500px;letter-spacing:0.156px;">Лента</div>
<div class="t " style="left:904.17px;top:500px;letter-spacing:-0.085px;">Отгрузка клиентам_СКЛАД №5 (ЯХРОМА)</div>
<div class="t " style="left:1183.67px;top:500px;letter-spacing:-0.275px;">Склад 5</div>
<div class="t " style="left:1287.17px;top:500px;letter-spacing:-0.114px;">Рейс 097166…</div>
<div class="t g" style="left:1466.0px;top:500px;letter-spacing:-0.275px;">10</div>
<div class="a" style="left:1496px;top:504px;width:2px;height:2px;background:linear-gradient(90deg,#fbe9a8,#f3c31b)"></div>
<div class="rl" style="top:552px"></div>
<div class="a" style="left:10px;top:537px;width:1px;height:4px;background:#d3e8f6"></div>
<div class="t " style="left:11.8px;top:529px;letter-spacing:-0.275px;">1:04</div>
<div class="t " style="left:85.4px;top:529px;letter-spacing:-0.297px;">00000000921</div>
<div class="t " style="left:246.5px;top:529px;letter-spacing:-0.281px;word-spacing:3.0px;">08.02.2024 17:37:40</div>
<div class="t " style="left:413.6px;top:529px;letter-spacing:-0.25px;">10.02.2024</div>
<div class="t " style="left:520.08px;top:529px;letter-spacing:-0.023px;">ЦБФП0002903</div>
<div class="dot" style="left:677px;top:531px"></div>
<div class="t blue" style="left:708.1px;top:529px;letter-spacing:0.156px;">Лента</div>
<div class="t " style="left:904.17px;top:529px;letter-spacing:-0.085px;">Отгрузка клиентам_СКЛАД №5 (ЯХРОМА)</div>
<div class="t " style="left:1183.67px;top:529px;letter-spacing:-0.275px;">Склад 5</div>
<div class="t " style="left:1287.17px;top:529px;letter-spacing:-0.114px;">Рейс 097166…</div>
<div class="t g" style="left:1466.0px;top:529px;letter-spacing:-0.275px;">16</div>
<div class="a" style="left:1496px;top:533px;width:2px;height:2px;background:linear-gradient(90deg,#fbe9a8,#f3c31b)"></div>
<div class="rw" style="top:553px;background:#fafafa"></div>
<div class="rl" style="top:581px"></div>
<div class="a" style="left:10px;top:566px;width:1px;height:4px;background:#d3e8f6"></div>
<div class="t " style="left:11.8px;top:558px;letter-spacing:-0.275px;">1:04</div>
<div class="t " style="left:85.4px;top:558px;letter-spacing:-0.297px;">00000000922</div>
<div class="t " style="left:246.5px;top:558px;letter-spacing:-0.281px;word-spacing:3.0px;">08.02.2024 17:33:22</div>
<div class="t " style="left:413.6px;top:558px;letter-spacing:-0.25px;">10.02.2024</div>
<div class="t " style="left:520.08px;top:558px;letter-spacing:-0.023px;">ЦБФП0002885</div>
<div class="dot" style="left:677px;top:560px"></div>
<div class="t blue" style="left:708.1px;top:558px;letter-spacing:0.156px;">Лента</div>
<div class="t " style="left:904.17px;top:558px;letter-spacing:-0.085px;">Отгрузка клиентам_СКЛАД №5 (ЯХРОМА)</div>
<div class="t " style="left:1183.67px;top:558px;letter-spacing:-0.275px;">Склад 5</div>
<div class="t " style="left:1287.17px;top:558px;letter-spacing:-0.114px;">Рейс 097166…</div>
<div class="t g" style="left:1466.0px;top:558px;letter-spacing:-0.275px;">16</div>
<div class="a" style="left:1496px;top:562px;width:2px;height:2px;background:linear-gradient(90deg,#fbe9a8,#f3c31b)"></div>
<div class="rl" style="top:610px"></div>
<div class="a" style="left:10px;top:595px;width:1px;height:4px;background:#d3e8f6"></div>
<div class="t " style="left:11.8px;top:587px;letter-spacing:-0.275px;">1:04</div>
<div class="t " style="left:85.4px;top:587px;letter-spacing:-0.297px;">00000000923</div>
<div class="t " style="left:246.5px;top:587px;letter-spacing:-0.281px;word-spacing:3.0px;">08.02.2024 17:38:16</div>
<div class="t " style="left:413.6px;top:587px;letter-spacing:-0.25px;">10.02.2024</div>
<div class="t " style="left:520.08px;top:587px;letter-spacing:-0.023px;">ЦБФП0002906</div>
<div class="dot" style="left:677px;top:589px"></div>
<div class="t blue" style="left:708.1px;top:587px;letter-spacing:0.156px;">Лента</div>
<div class="t " style="left:904.17px;top:587px;letter-spacing:-0.085px;">Отгрузка клиентам_СКЛАД №5 (ЯХРОМА)</div>
<div class="t " style="left:1183.67px;top:587px;letter-spacing:-0.275px;">Склад 5</div>
<div class="t " style="left:1287.17px;top:587px;letter-spacing:-0.114px;">Рейс 097166…</div>
<div class="t g" style="left:1466.0px;top:587px;letter-spacing:-0.275px;">10</div>
<div class="a" style="left:1496px;top:591px;width:2px;height:2px;background:linear-gradient(90deg,#fbe9a8,#f3c31b)"></div>
<div class="rw" style="top:611px;background:#fafafa"></div>
<div class="rl" style="top:639px"></div>
<div class="a" style="left:10px;top:624px;width:1px;height:4px;background:#d3e8f6"></div>
<div class="t " style="left:11.8px;top:616px;letter-spacing:-0.275px;">1:04</div>
<div class="t " style="left:85.4px;top:616px;letter-spacing:-0.297px;">00000000924</div>
<div class="t " style="left:246.5px;top:616px;letter-spacing:-0.281px;word-spacing:3.0px;">08.02.2024 17:36:21</div>
<div class="t " style="left:413.6px;top:616px;letter-spacing:-0.25px;">10.02.2024</div>
<div class="t " style="left:520.08px;top:616px;letter-spacing:-0.023px;">ЦБФП0002898</div>
<div class="dot" style="left:677px;top:618px"></div>
<div class="t blue" style="left:708.1px;top:616px;letter-spacing:0.156px;">Лента</div>
<div class="t " style="left:904.17px;top:616px;letter-spacing:-0.085px;">Отгрузка клиентам_СКЛАД №5 (ЯХРОМА)</div>
<div class="t " style="left:1183.67px;top:616px;letter-spacing:-0.275px;">Склад 5</div>
<div class="t " style="left:1287.17px;top:616px;letter-spacing:-0.114px;">Рейс 097166…</div>
<div class="t g" style="left:1466.0px;top:616px;letter-spacing:-0.275px;">12</div>
<div class="a" style="left:1496px;top:620px;width:2px;height:2px;background:linear-gradient(90deg,#fbe9a8,#f3c31b)"></div>
<div class="rl" style="top:668px"></div>
<div class="a" style="left:10px;top:653px;width:1px;height:4px;background:#d3e8f6"></div>
<div class="t " style="left:11.8px;top:645px;letter-spacing:-0.275px;">1:04</div>
<div class="t " style="left:85.4px;top:645px;letter-spacing:-0.297px;">00000000925</div>
<div class="t " style="left:246.5px;top:645px;letter-spacing:-0.281px;word-spacing:3.0px;">08.02.2024 17:40:51</div>
<div class="t " style="left:413.6px;top:645px;letter-spacing:-0.25px;">10.02.2024</div>
<div class="t " style="left:520.08px;top:645px;letter-spacing:-0.023px;">ЦБФП0002916</div>
<div class="dot" style="left:677px;top:647px"></div>
<div class="t blue" style="left:708.1px;top:645px;letter-spacing:0.156px;">Лента</div>
<div class="t " style="left:904.17px;top:645px;letter-spacing:-0.085px;">Отгрузка клиентам_СКЛАД №5 (ЯХРОМА)</div>
<div class="t " style="left:1183.67px;top:645px;letter-spacing:-0.275px;">Склад 5</div>
<div class="t " style="left:1287.17px;top:645px;letter-spacing:-0.114px;">Рейс 097166…</div>
<div class="t g" style="left:1466.0px;top:645px;letter-spacing:-0.275px;">20</div>
<div class="a" style="left:1496px;top:649px;width:2px;height:2px;background:linear-gradient(90deg,#fbe9a8,#f3c31b)"></div>
<div class="rw" style="top:669px;background:#fafafa"></div>
<div class="rl" style="top:697px"></div>
<div class="a" style="left:10px;top:682px;width:1px;height:4px;background:#d3e8f6"></div>
<div class="t " style="left:11.8px;top:674px;letter-spacing:-0.275px;">1:04</div>
<div class="t " style="left:85.4px;top:674px;letter-spacing:-0.297px;">00000000926</div>
<div class="t " style="left:246.5px;top:674px;letter-spacing:-0.281px;word-spacing:3.0px;">08.02.2024 17:39:05</div>
<div class="t " style="left:413.6px;top:674px;letter-spacing:-0.25px;">10.02.2024</div>
<div class="t " style="left:520.08px;top:674px;letter-spacing:-0.023px;">ЦБФП0002909</div>
<div class="dot" style="left:677px;top:676px"></div>
<div class="t blue" style="left:708.1px;top:674px;letter-spacing:0.156px;">Лента</div>
<div class="t " style="left:904.17px;top:674px;letter-spacing:-0.085px;">Отгрузка клиентам_СКЛАД №5 (ЯХРОМА)</div>
<div class="t " style="left:1183.67px;top:674px;letter-spacing:-0.275px;">Склад 5</div>
<div class="t " style="left:1287.17px;top:674px;letter-spacing:-0.114px;">Рейс 097166…</div>
<div class="t g" style="left:1466.0px;top:674px;letter-spacing:-0.275px;">12</div>
<div class="a" style="left:1496px;top:678px;width:2px;height:2px;background:linear-gradient(90deg,#fbe9a8,#f3c31b)"></div>
<svg class="a" style="left:1098px;top:20px" width="120" height="70" viewBox="1098 20 120 70"><path d="M1105.8 54.5 L1157.8 28.2 L1157.8 41.4 L1209.5 41.4 L1209.5 67.4 L1157.8 67.4 L1157.8 80.8 Z" fill="none" stroke="#ec1c24" stroke-width="4.7" stroke-linejoin="round"/></svg>
<svg class="a" style="left:810px;top:650px" width="115" height="40" viewBox="810 650 115 40"><path d="M818.5 666.3 L867.5 666.3 L867.5 660 L917.4 672 L867.5 684 L867.5 677.5 L818.5 677.5 Z" fill="none" stroke="#ec1c24" stroke-width="4.7" stroke-linejoin="round"/></svg>
<div class="menu">
<div class="ms" style="top:122px"></div>
<div class="ms" style="top:156px"></div>
<div class="ms" style="top:220px"></div>
<div class="ms" style="top:314px"></div>
<div class="ms" style="top:378px"></div>
<div class="a" style="left:1px;top:411px;width:471px;height:29px;background:#767676"></div>
<div class="a" style="right:14px;top:390.5px;width:0;height:0;border-top:5px solid transparent;border-bottom:5px solid transparent;border-left:5px solid #454545"></div>
</div>
<div class="t " style="left:967.17px;top:252px;letter-spacing:-0.125px;">Создать</div>
<div class="t k" style="left:1349.35px;top:252px;letter-spacing:-0.113px;">Ins</div>
<div class="t dis" style="left:967.17px;top:282px;letter-spacing:-0.2px;">Скопировать</div>
<div class="t k" style="left:1351.67px;top:282px;letter-spacing:-0.175px;">F9</div>
<div class="t dis" style="left:967.07px;top:312px;letter-spacing:-0.271px;">Изменить</div>
<div class="t k" style="left:1351.67px;top:312px;letter-spacing:-0.175px;">F2</div>
<div class="t " style="left:966.8px;top:342px;letter-spacing:-0.061px;">Пометить на удаление / Снять пометку</div>
<div class="t k" style="left:1347.48px;top:342px;letter-spacing:-0.05px;">Del</div>
<div class="t " style="left:967.73px;top:376px;letter-spacing:-0.072px;">Установить период...</div>
<div class="t " style="left:967.1px;top:410px;letter-spacing:-0.175px;">Провести</div>
<div class="t " style="left:967.48px;top:440px;letter-spacing:-0.183px;">Отменить проведение</div>
<div class="t " style="left:966.98px;top:474px;letter-spacing:-0.067px;">Найти: Тип отгрузки - Отгрузка клиентам_СК...</div>
<div class="t k" style="left:1307.38px;top:474px;letter-spacing:0.081px;">Ctrl+Alt+F</div>
<div class="t " style="left:966.98px;top:504px;letter-spacing:0.022px;">Расширенный поиск</div>
<div class="t k" style="left:1335.8px;top:504px;letter-spacing:0.044px;">Alt+F</div>
<div class="t " style="left:967.48px;top:534px;letter-spacing:-0.202px;">Отменить поиск</div>
<div class="t k" style="left:1329.38px;top:534px;letter-spacing:-0.105px;">Ctrl+Q</div>
<div class="t " style="left:966.98px;top:568px;letter-spacing:-0.119px;">Копировать</div>
<div class="t k" style="left:1330.08px;top:568px;letter-spacing:-0.12px;">Ctrl+C</div>
<div class="t " style="left:966.98px;top:598px;letter-spacing:0.109px;">Искать везде &quot;Отгрузка клиент...&quot;</div>
<div class="t k" style="left:1336.6px;top:598px;letter-spacing:0.0px;">Alt+L</div>
<div class="t " style="left:967.48px;top:632px;letter-spacing:-0.062px;">Создать на основании</div>
<div class="t " style="left:967.6px;top:662px;letter-spacing:0.003px;color:#0c0c0c;">Заполнить коды SSCC по умолчанию (ЛЕНТА)</div>
<svg class="a" style="left:940px;top:254px;" width="14" height="14" viewBox="0 0 14 14"><circle cx="7" cy="7" r="6.6" fill="#3bb455" stroke="#219a3c" stroke-width="0.9"/><path d="M7 2.8 V11.2 M2.8 7 H11.2" stroke="#f6fcf6" stroke-width="2.2" fill="none"/></svg>
<svg class="a" style="left:940px;top:284px;" width="14" height="16" viewBox="0 0 14 16"><path d="M1.7 0.6 H9.2 L12.4 3.8 V13.3 H1.7 Z" fill="#d2d2d2" stroke="#a9b4c3" stroke-width="1"/><path d="M9 0.8 V4 H12.2" fill="#ececec" stroke="#a9b4c3" stroke-width="0.8"/><circle cx="4.5" cy="10.4" r="4.4" fill="#96b498"/><path d="M4.5 7.7 V13.1 M1.8 10.4 H7.2" stroke="#dbe6dc" stroke-width="1.3" fill="none"/></svg>
<svg class="a" style="left:940px;top:315px;" width="14" height="13" viewBox="0 0 14 13"><path d="M0.2 12.6 L1.0 8.8 L4.0 11.8 Z" fill="#c4bcb4"/><path d="M1.0 8.8 L8.1 1.9 L11.1 4.9 L4.0 11.8 Z" fill="#a9bba8"/><path d="M8.1 1.9 L10.0 0 L13.1 3 L11.1 4.9 Z" fill="#9aa5b3"/></svg>
<svg class="a" style="left:940px;top:344px;" width="13" height="15" viewBox="0 0 13 15"><path d="M1 0.6 H8 L11.4 4 V13.2 H1 Z" fill="#fff" stroke="#5f7f9f" stroke-width="1"/><path d="M7.8 0.8 V4.2 H11.2" fill="none" stroke="#5f7f9f" stroke-width="0.9"/><circle cx="3.6" cy="10.4" r="4.4" fill="#d9242b"/><path d="M1.7 8.5 L5.5 12.3 M5.5 8.5 L1.7 12.3" stroke="#fff" stroke-width="1.5" fill="none"/></svg>
<svg class="a" style="left:939px;top:379px;" width="17" height="13" viewBox="0 0 17 13"><path d="M3.4 0.9 Q0.3 6.1 3.4 11.3" fill="none" stroke="#123c60" stroke-width="2" stroke-linecap="round"/><path d="M12.8 0.9 Q15.9 6.1 12.8 11.3" fill="none" stroke="#123c60" stroke-width="2" stroke-linecap="round"/><path d="M3.8 6.1 L7.3 2.8 V9.4 Z" fill="#123c60"/><path d="M12.4 6.1 L8.9 2.8 V9.4 Z" fill="#123c60"/></svg>
<svg class="a" style="left:939px;top:411px;" width="16" height="16" viewBox="0 0 16 16"><rect x="0.5" y="0.6" width="10" height="13" fill="#fff" stroke="#7d96b1" stroke-width="1"/><path d="M2 3 H5 M2 5.2 H6 M2 7.4 H6.5 M2 9.6 H7 M2 11.6 H6" stroke="#a9b2bc" stroke-width="0.9" fill="none"/><rect x="7.6" y="9.2" width="6.2" height="6.4" rx="1.6" fill="#f2d544" stroke="#c9a227" stroke-width="0.7"/><path d="M8 11.4 H13.4 M8 13.4 H13.4" stroke="#c9a227" stroke-width="0.7"/><ellipse cx="10.7" cy="9.8" rx="2.9" ry="1" fill="#fbe98a"/><path d="M5.4 0.5 H9.6 Q12.4 0.5 12.4 3.4 V4.6 H15.3 L10.9 9.2 L6.6 4.6 H9.4 V3.6 Q9.4 3.2 9 3.2 H5.4 Z" fill="#2fd675" stroke="#149a45" stroke-width="0.8" stroke-linejoin="round"/></svg>
<svg class="a" style="left:939px;top:441px;" width="17" height="16" viewBox="0 0 17 16"><rect x="0.5" y="0.6" width="10" height="13" fill="#fff" stroke="#7d96b1" stroke-width="1"/><path d="M2 3 H5 M2 5.2 H6 M2 7.4 H6.5 M2 9.6 H7 M2 11.6 H6" stroke="#a9b2bc" stroke-width="0.9" fill="none"/><rect x="7.6" y="9.2" width="6.2" height="6.4" rx="1.6" fill="#f2d544" stroke="#c9a227" stroke-width="0.7"/><path d="M8 11.4 H13.4 M8 13.4 H13.4" stroke="#c9a227" stroke-width="0.7"/><ellipse cx="10.7" cy="9.8" rx="2.9" ry="1" fill="#fbe98a"/><path d="M11.2 0.6 L6.6 4.4 L11.2 8 V5.6 Q13 5.6 13 7.6 V10.6 H16 V7 Q16 3 11.2 3 Z" fill="#ff4632" stroke="#d92a1e" stroke-width="0.7" stroke-linejoin="round"/></svg>
<svg class="a" style="left:939px;top:507px;" width="16" height="14" viewBox="0 0 16 14"><circle cx="7.5" cy="4.4" r="3.6" fill="#fff" stroke="#2f7fae" stroke-width="1.5"/><path d="M10.2 7.3 L14.3 11.4" stroke="#2f7fae" stroke-width="1.9" stroke-linecap="round"/><rect x="0" y="11" width="2.1" height="1.9" fill="#2f7fae"/><rect x="3.1" y="11" width="2.1" height="1.9" fill="#2f7fae"/><rect x="6.2" y="11" width="2.1" height="1.9" fill="#2f7fae"/></svg>
<svg class="a" style="left:939px;top:537px;" width="16" height="14" viewBox="0 0 16 14"><circle cx="7.5" cy="4.4" r="3.6" fill="#fff" stroke="#2f7fae" stroke-width="1.5"/><path d="M10.2 7.3 L14.3 11.4" stroke="#2f7fae" stroke-width="1.9" stroke-linecap="round"/><path d="M0.8 6.6 L6.6 12.4 M6.6 6.6 L0.8 12.4" stroke="#e32222" stroke-width="2.1" fill="none"/></svg>
<svg class="a" style="left:939px;top:569px;" width="15" height="15" viewBox="0 0 15 15"><path d="M0.5 0.5 H5.6 L8.3 3.2 V9.4 H0.5 Z" fill="#fff" stroke="#5f7488" stroke-width="1"/><path d="M5.4 0.7 V3.4 H8.1" fill="none" stroke="#5f7488" stroke-width="0.8"/><path d="M2 4.4 H6.6 M2 6 H6.6 M2 7.6 H6.6" stroke="#a4adb6" stroke-width="0.8" fill="none"/><path d="M6.6 5.4 H11.7 L14.4 8.100000000000001 V14.3 H6.6 Z" fill="#fff" stroke="#5f7488" stroke-width="1"/><path d="M11.5 5.6000000000000005 V8.3 H14.2" fill="none" stroke="#5f7488" stroke-width="0.8"/><path d="M8.1 9.3 H12.7 M8.1 10.9 H12.7 M8.1 12.5 H12.7" stroke="#a4adb6" stroke-width="0.8" fill="none"/></svg>
<svg class="a" style="left:939px;top:663px;" width="16" height="16" viewBox="0 0 16 16"><path d="M8 0 L16 4.2 L8 8.1 L0 4.1 Z" fill="#dcaa7b"/><path d="M0 4.1 L8 8.1 L8 15.9 L0 11.8 Z" fill="#a57a47"/><path d="M16 4.2 L8 8.1 L8 15.9 L16 11.8 Z" fill="#b5854f"/><path d="M4.2 1.9 L6.6 0.7 L14.4 4.9 L14.4 6.6 L12.1 7.7 L12.1 6.1 Z" fill="#f1cdac"/></svg>
</body></html>
